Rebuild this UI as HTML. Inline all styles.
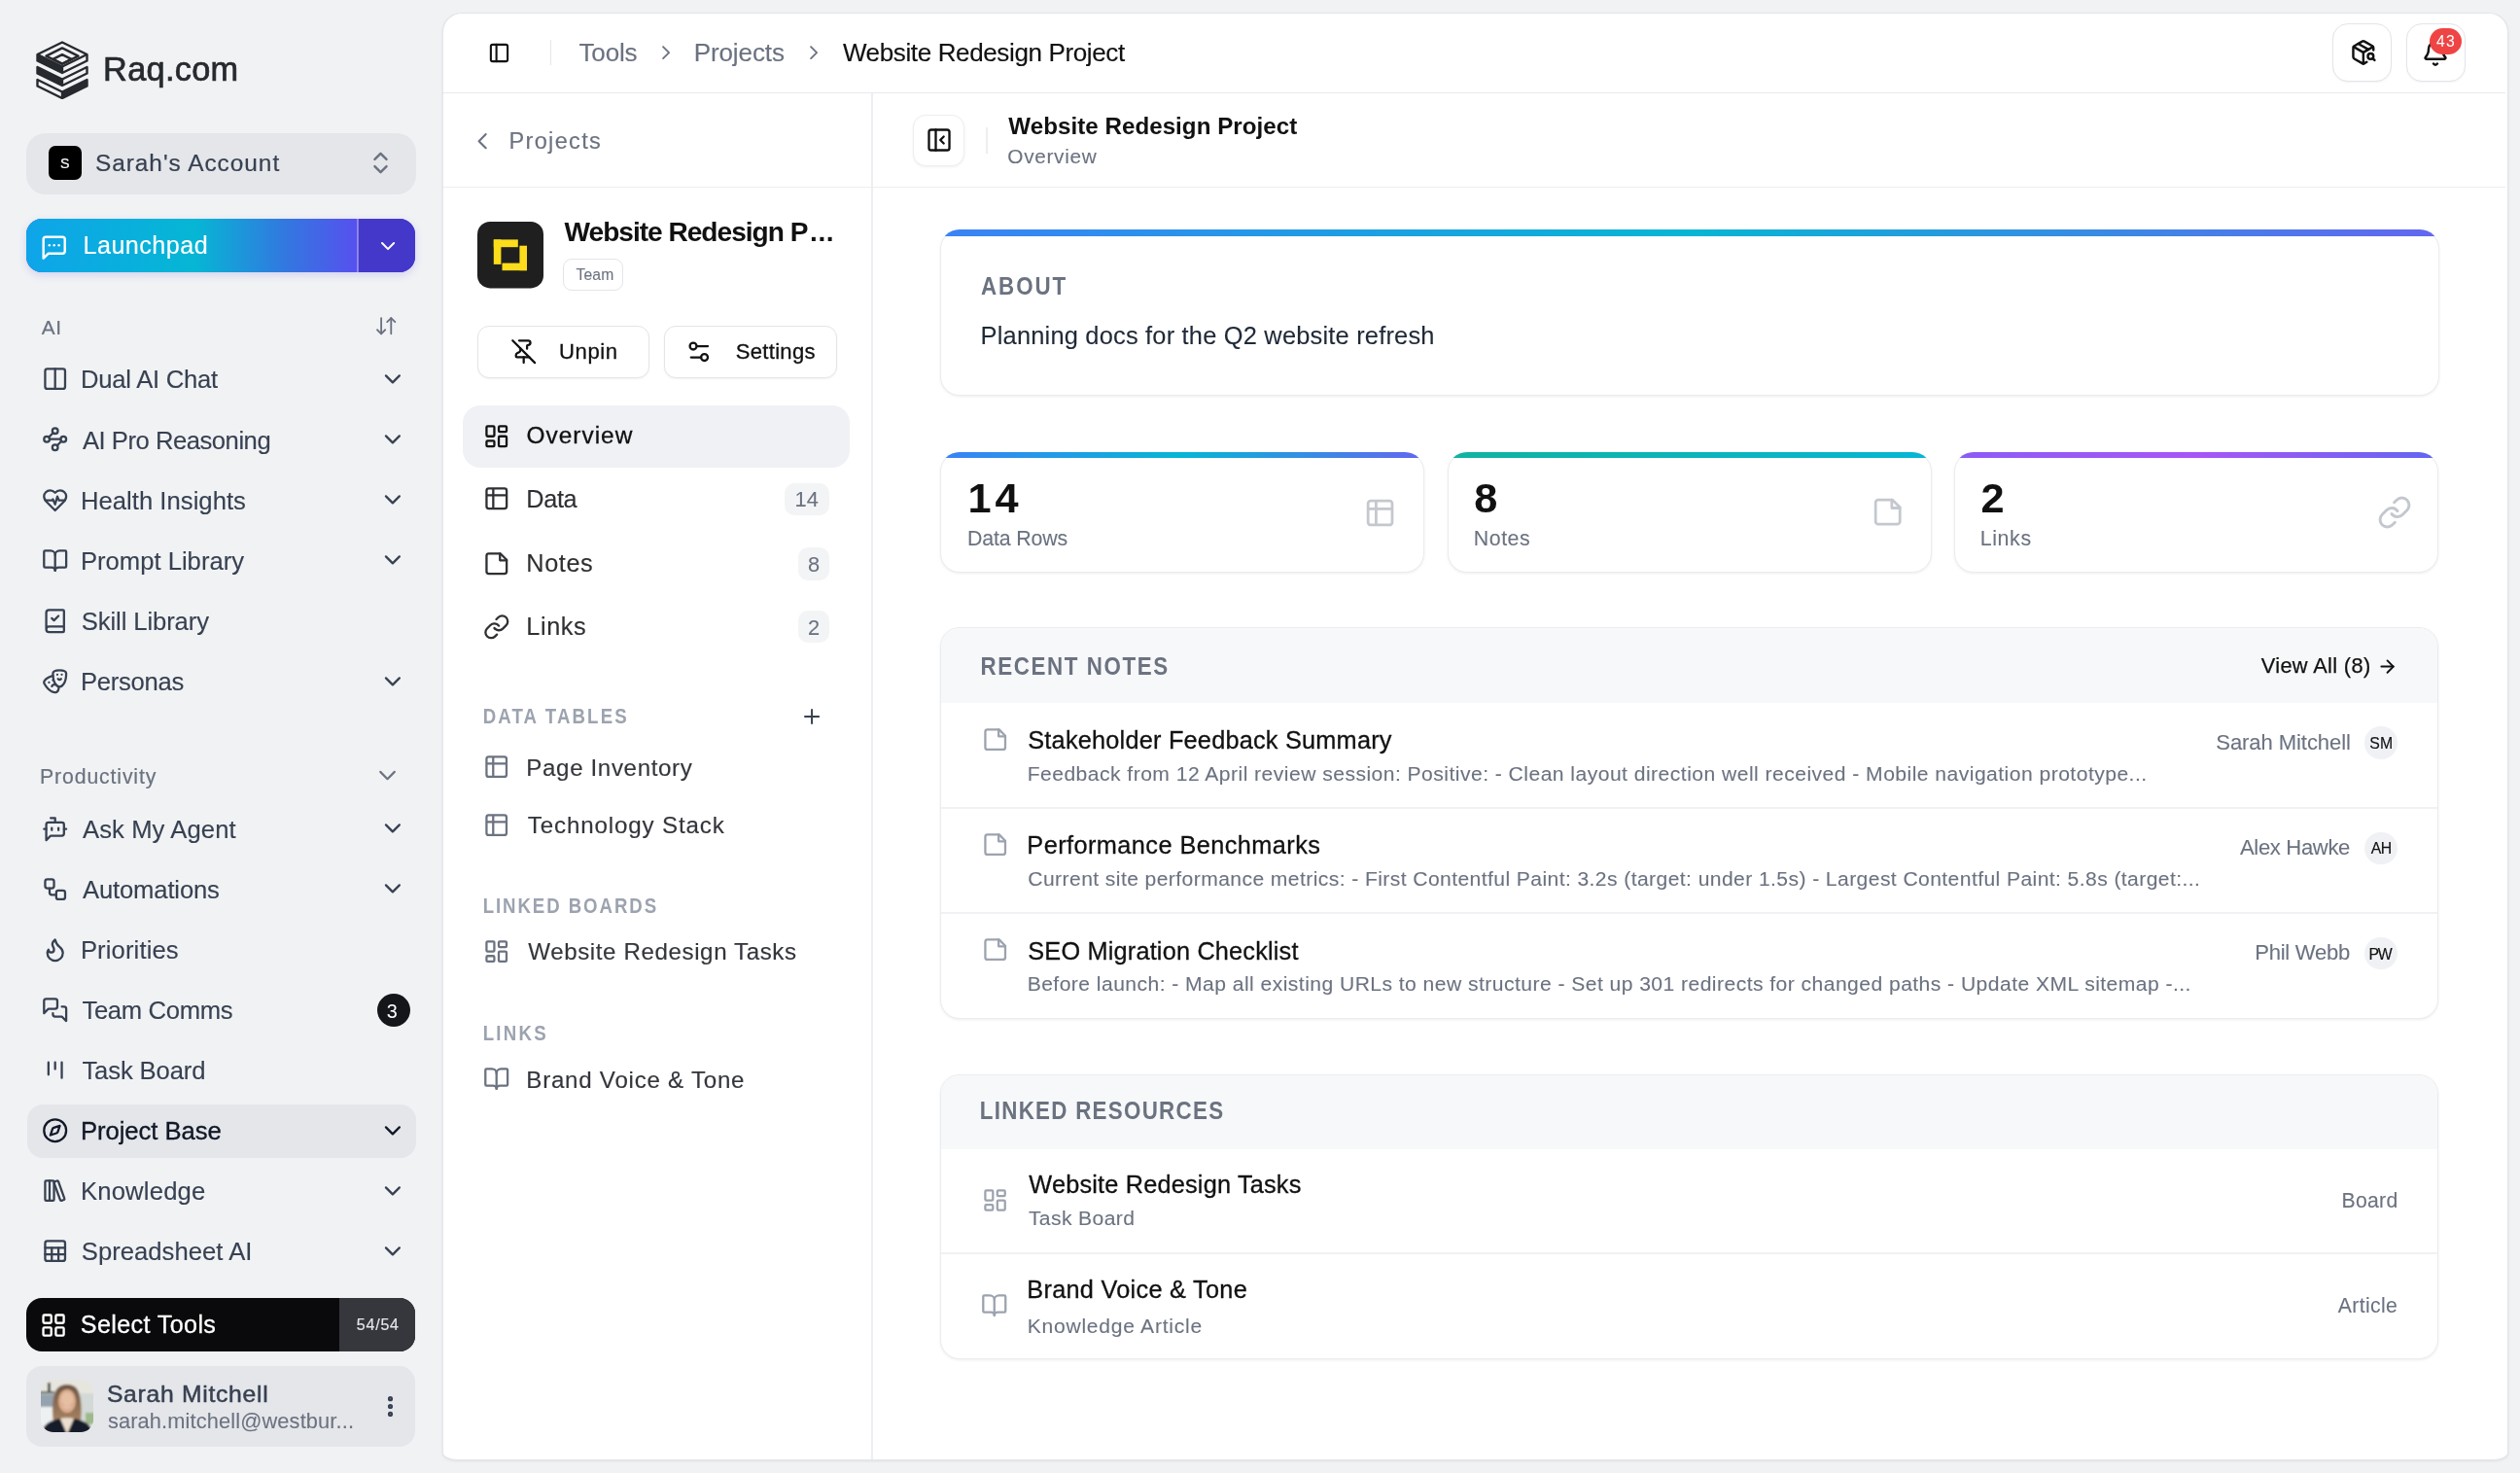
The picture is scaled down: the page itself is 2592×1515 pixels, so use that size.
<!DOCTYPE html>
<html><head><meta charset="utf-8"><style>
html,body{margin:0;padding:0;}
body{width:2592px;height:1515px;overflow:hidden;position:relative;background:#f1f2f4;font-family:"Liberation Sans",sans-serif;}
svg text{font-family:"Liberation Sans",sans-serif;}
</style></head><body>
<svg style="position:absolute;left:37px;top:42px" width="54" height="60" viewBox="0 0 54 60">
<g fill="none" stroke="#262a2e" stroke-width="2.4" stroke-linejoin="round">
<path d="M27 1.5 L52.5 14 L52.5 20.5 L27 33 L1.5 20.5 L1.5 14 Z"/>
<path d="M1.5 14 L27 26.5 L52.5 14"/>
<path d="M27 7.4 L43.5 15.6 L27 23.8 L10.5 15.6 Z"/>
<path d="M27 14.2 L36.5 18.9 L27 23.6 L17.5 18.9 Z"/>
<path d="M27 26.5 L27 33"/>
<path d="M1.5 27 L27 39.5 L52.5 27 L52.5 33.5 L27 46 L1.5 33.5 Z"/>
<path d="M27 39.5 L27 46"/>
<path d="M1.5 40 L27 52.5 L52.5 40 L52.5 46.5 L27 59 L1.5 46.5 Z"/>
<path d="M27 52.5 L27 59"/>
</g>
<g fill="#262a2e">
<path d="M1.5 14 L27 26.5 L27 33 L1.5 20.5 Z"/>
<path d="M1.5 27 L27 39.5 L27 46 L1.5 33.5 Z"/>
<path d="M52.5 40 L27 52.5 L27 59 L52.5 46.5 Z"/>
</g></svg>
<div style="position:absolute;left:27px;top:136.5px;width:401px;height:63.5px;background:#e5e6ea;border-radius:20px;"></div>
<div style="position:absolute;left:49.5px;top:150px;width:34.5px;height:34.5px;background:#000;border-radius:7px;"></div>
<svg style="position:absolute;left:376.75px;top:152.88px" width="29.00" height="29.00" viewBox="0 0 24 24" fill="none" stroke="#6b7280" stroke-width="2" stroke-linecap="round" stroke-linejoin="round"><path d="m7 15 5 5 5-5"/><path d="m7 9 5-5 5 5"/></svg>
<div style="position:absolute;left:27px;top:225px;width:400px;height:55px;border-radius:16px;background:#4338ca;box-shadow:0 3px 8px rgba(79,70,229,0.18);"></div>
<div style="position:absolute;left:27px;top:225px;width:341px;height:55px;border-radius:16px 0 0 16px;background:linear-gradient(90deg,#0ea5e9 0%,#06b6d4 51%,#3278e0 78%,#5750ee 100%);"></div>
<div style="position:absolute;left:368px;top:225px;width:59px;height:55px;background:#4338ca;border-radius:0 16px 16px 0;"></div>
<div style="position:absolute;left:367px;top:225px;width:1.5px;height:55px;background:rgba(255,255,255,0.35);"></div>
<svg style="position:absolute;left:40.55px;top:239.55px" width="29.40" height="29.40" viewBox="0 0 24 24" fill="none" stroke="#fff" stroke-width="2" stroke-linecap="round" stroke-linejoin="round"><path d="M21 15a2 2 0 0 1-2 2H7l-4 4V5a2 2 0 0 1 2-2h14a2 2 0 0 1 2 2z"/><path d="M8 10h.01"/><path d="M12 10h.01"/><path d="M16 10h.01"/></svg>
<svg style="position:absolute;left:386.97px;top:241.45px" width="24.15" height="24.15" viewBox="0 0 24 24" fill="none" stroke="#fff" stroke-width="2" stroke-linecap="round" stroke-linejoin="round"><path d="m6 9 6 6 6-6"/></svg>
<svg style="position:absolute;left:384.97px;top:323.45px" width="24.40" height="24.40" viewBox="0 0 24 24" fill="none" stroke="#6b7280" stroke-width="1.8" stroke-linecap="round" stroke-linejoin="round"><path d="m3 16 4 4 4-4"/><path d="M7 20V4"/><path d="m21 8-4-4-4 4"/><path d="M17 4v16"/></svg>
<svg style="position:absolute;left:42.50px;top:376.30px" width="27.40" height="27.40" viewBox="0 0 24 24" fill="none" stroke="#374151" stroke-width="2" stroke-linecap="round" stroke-linejoin="round"><rect width="18" height="18" x="3" y="3" rx="2"/><path d="M12 3v18"/></svg>
<svg style="position:absolute;left:390.21px;top:376.03px" width="27.81" height="27.81" viewBox="0 0 24 24" fill="none" stroke="#374151" stroke-width="2" stroke-linecap="round" stroke-linejoin="round"><path d="m6 9 6 6 6-6"/></svg>
<svg style="position:absolute;left:42.50px;top:438.42px" width="27.40" height="27.40" viewBox="0 0 24 24" fill="none" stroke="#374151" stroke-width="2" stroke-linecap="round" stroke-linejoin="round"><circle cx="12" cy="4.5" r="2.5"/><path d="m10.2 6.3-3.9 3.9"/><circle cx="4.5" cy="12" r="2.5"/><path d="M7 12h10"/><circle cx="19.5" cy="12" r="2.5"/><path d="m13.8 17.7 3.9-3.9"/><circle cx="12" cy="19.5" r="2.5"/></svg>
<svg style="position:absolute;left:390.21px;top:438.15px" width="27.81" height="27.81" viewBox="0 0 24 24" fill="none" stroke="#374151" stroke-width="2" stroke-linecap="round" stroke-linejoin="round"><path d="m6 9 6 6 6-6"/></svg>
<svg style="position:absolute;left:42.50px;top:500.54px" width="27.40" height="27.40" viewBox="0 0 24 24" fill="none" stroke="#374151" stroke-width="2" stroke-linecap="round" stroke-linejoin="round"><path d="M19 14c1.49-1.46 3-3.21 3-5.5A5.5 5.5 0 0 0 16.5 3c-1.76 0-3 .5-4.5 2-1.5-1.5-2.74-2-4.5-2A5.5 5.5 0 0 0 2 8.5c0 2.3 1.5 4.05 3 5.5l7 7Z"/><path d="M3.22 12H9.5l.5-1 2 4.5 2-7 1.5 3.5h5.27"/></svg>
<svg style="position:absolute;left:390.21px;top:500.27px" width="27.81" height="27.81" viewBox="0 0 24 24" fill="none" stroke="#374151" stroke-width="2" stroke-linecap="round" stroke-linejoin="round"><path d="m6 9 6 6 6-6"/></svg>
<svg style="position:absolute;left:42.50px;top:562.66px" width="27.40" height="27.40" viewBox="0 0 24 24" fill="none" stroke="#374151" stroke-width="2" stroke-linecap="round" stroke-linejoin="round"><path d="M12 7v14"/><path d="M3 18a1 1 0 0 1-1-1V4a1 1 0 0 1 1-1h5a4 4 0 0 1 4 4 4 4 0 0 1 4-4h5a1 1 0 0 1 1 1v13a1 1 0 0 1-1 1h-6a3 3 0 0 0-3 3 3 3 0 0 0-3-3z"/></svg>
<svg style="position:absolute;left:390.21px;top:562.39px" width="27.81" height="27.81" viewBox="0 0 24 24" fill="none" stroke="#374151" stroke-width="2" stroke-linecap="round" stroke-linejoin="round"><path d="m6 9 6 6 6-6"/></svg>
<svg style="position:absolute;left:42.50px;top:624.78px" width="27.40" height="27.40" viewBox="0 0 24 24" fill="none" stroke="#374151" stroke-width="2" stroke-linecap="round" stroke-linejoin="round"><path d="M4 19.5v-15A2.5 2.5 0 0 1 6.5 2H19a1 1 0 0 1 1 1v18a1 1 0 0 1-1 1H6.5a1 1 0 0 1 0-5H20"/><path d="m9 9.5 2 2 4-4"/></svg>
<svg style="position:absolute;left:42.50px;top:686.90px" width="27.40" height="27.40" viewBox="0 0 24 24" fill="none" stroke="#374151" stroke-width="2" stroke-linecap="round" stroke-linejoin="round"><path d="M10 11h.01"/><path d="M14 6h.01"/><path d="M18 6h.01"/><path d="M6.5 13.1h.01"/><path d="M22 5c0 9-4 12-6 12s-6-3-6-12c0-2 2-3 6-3s6 1 6 3"/><path d="M17.4 9.9c-.8.8-2 .8-2.8 0"/><path d="M10.1 7.1C9 7.2 7.7 7.7 6 8.6c-3.5 2-4.7 3.9-3.7 5.6 4.5 7.8 9.5 8.4 11.2 7.4.9-.5 1.9-2.1 1.9-4.7"/><path d="M9.1 16.5c.3-1.1 1.4-1.7 2.4-1.4"/></svg>
<svg style="position:absolute;left:390.21px;top:686.63px" width="27.81" height="27.81" viewBox="0 0 24 24" fill="none" stroke="#374151" stroke-width="2" stroke-linecap="round" stroke-linejoin="round"><path d="m6 9 6 6 6-6"/></svg>
<svg style="position:absolute;left:383.55px;top:782.91px" width="29.06" height="29.06" viewBox="0 0 24 24" fill="none" stroke="#6b7280" stroke-width="1.8" stroke-linecap="round" stroke-linejoin="round"><path d="m6 9 6 6 6-6"/></svg>
<svg style="position:absolute;left:42.50px;top:838.50px" width="27.40" height="27.40" viewBox="0 0 24 24" fill="none" stroke="#374151" stroke-width="2" stroke-linecap="round" stroke-linejoin="round"><path d="M12 6V2H8"/><path d="m8 18-4 4V8a2 2 0 0 1 2-2h12a2 2 0 0 1 2 2v8a2 2 0 0 1-2 2Z"/><path d="M2 12h2"/><path d="M9 11v2"/><path d="M15 11v2"/><path d="M20 12h2"/></svg>
<svg style="position:absolute;left:390.21px;top:838.23px" width="27.81" height="27.81" viewBox="0 0 24 24" fill="none" stroke="#374151" stroke-width="2" stroke-linecap="round" stroke-linejoin="round"><path d="m6 9 6 6 6-6"/></svg>
<svg style="position:absolute;left:42.50px;top:900.61px" width="27.40" height="27.40" viewBox="0 0 24 24" fill="none" stroke="#374151" stroke-width="2" stroke-linecap="round" stroke-linejoin="round"><rect width="8" height="8" x="3" y="3" rx="2"/><path d="M7 11v4a2 2 0 0 0 2 2h4"/><rect width="8" height="8" x="13" y="13" rx="2"/></svg>
<svg style="position:absolute;left:390.21px;top:900.34px" width="27.81" height="27.81" viewBox="0 0 24 24" fill="none" stroke="#374151" stroke-width="2" stroke-linecap="round" stroke-linejoin="round"><path d="m6 9 6 6 6-6"/></svg>
<svg style="position:absolute;left:42.50px;top:962.72px" width="27.40" height="27.40" viewBox="0 0 24 24" fill="none" stroke="#374151" stroke-width="2" stroke-linecap="round" stroke-linejoin="round"><path d="M8.5 14.5A2.5 2.5 0 0 0 11 12c0-1.38-.5-2-1-3-1.072-2.143-.224-4.054 2-6 .5 2.5 2 4.9 4 6.5 2 1.6 3 3.5 3 5.5a7 7 0 1 1-14 0c0-1.153.433-2.294 1-3a2.5 2.5 0 0 0 2.5 2.5z"/></svg>
<svg style="position:absolute;left:42.50px;top:1024.83px" width="27.40" height="27.40" viewBox="0 0 24 24" fill="none" stroke="#374151" stroke-width="2" stroke-linecap="round" stroke-linejoin="round"><path d="M14 9a2 2 0 0 1-2 2H6l-4 4V4a2 2 0 0 1 2-2h8a2 2 0 0 1 2 2z"/><path d="M18 9h2a2 2 0 0 1 2 2v11l-4-4h-6a2 2 0 0 1-2-2v-1"/></svg>
<div style="position:absolute;left:388px;top:1021.7px;width:34px;height:34px;background:#151619;border-radius:50%;"></div>
<svg style="position:absolute;left:42.50px;top:1086.94px" width="27.40" height="27.40" viewBox="0 0 24 24" fill="none" stroke="#374151" stroke-width="2" stroke-linecap="round" stroke-linejoin="round"><path d="M6 5v11"/><path d="M12 5v6"/><path d="M18 5v14"/></svg>
<div style="position:absolute;left:27.5px;top:1135.8px;width:400.5px;height:55px;background:#e5e6ea;border-radius:16px;"></div>
<svg style="position:absolute;left:42.50px;top:1149.05px" width="27.40" height="27.40" viewBox="0 0 24 24" fill="none" stroke="#111827" stroke-width="2" stroke-linecap="round" stroke-linejoin="round"><path d="m16.24 7.76-1.804 5.411a2 2 0 0 1-1.265 1.265L7.76 16.24l1.804-5.411a2 2 0 0 1 1.265-1.265z"/><circle cx="12" cy="12" r="10"/></svg>
<svg style="position:absolute;left:390.21px;top:1148.78px" width="27.81" height="27.81" viewBox="0 0 24 24" fill="none" stroke="#111827" stroke-width="2" stroke-linecap="round" stroke-linejoin="round"><path d="m6 9 6 6 6-6"/></svg>
<svg style="position:absolute;left:42.50px;top:1211.16px" width="27.40" height="27.40" viewBox="0 0 24 24" fill="none" stroke="#374151" stroke-width="2" stroke-linecap="round" stroke-linejoin="round"><rect width="8" height="18" x="3" y="3" rx="1"/><path d="M7 3v18"/><path d="M20.4 18.9c.2.5-.1 1.1-.6 1.3l-1.9.7c-.5.2-1.100-.1-1.300-.6L11.1 5.1c-.2-.5.1-1.100.6-1.300l1.900-.7c.5-.2 1.100.1 1.300.6Z"/></svg>
<svg style="position:absolute;left:390.21px;top:1210.89px" width="27.81" height="27.81" viewBox="0 0 24 24" fill="none" stroke="#374151" stroke-width="2" stroke-linecap="round" stroke-linejoin="round"><path d="m6 9 6 6 6-6"/></svg>
<svg style="position:absolute;left:42.50px;top:1273.27px" width="27.40" height="27.40" viewBox="0 0 24 24" fill="none" stroke="#374151" stroke-width="2" stroke-linecap="round" stroke-linejoin="round"><rect width="18" height="18" x="3" y="3" rx="2" ry="2"/><line x1="3" x2="21" y1="9" y2="9"/><line x1="3" x2="21" y1="15" y2="15"/><line x1="9" x2="9" y1="9" y2="21"/><line x1="15" x2="15" y1="9" y2="21"/></svg>
<svg style="position:absolute;left:390.21px;top:1273.00px" width="27.81" height="27.81" viewBox="0 0 24 24" fill="none" stroke="#374151" stroke-width="2" stroke-linecap="round" stroke-linejoin="round"><path d="m6 9 6 6 6-6"/></svg>
<div style="position:absolute;left:27px;top:1335px;width:400px;height:55.3px;background:#0a0a0c;border-radius:16px;"></div>
<div style="position:absolute;left:349px;top:1335px;width:78px;height:55.3px;background:#36373c;border-radius:0 16px 16px 0;"></div>
<svg style="position:absolute;left:41.45px;top:1349.36px" width="28.14" height="28.14" viewBox="0 0 24 24" fill="none" stroke="#fff" stroke-width="2" stroke-linecap="round" stroke-linejoin="round"><rect width="7" height="7" x="3" y="3" rx="1"/><rect width="7" height="7" x="14" y="3" rx="1"/><rect width="7" height="7" x="14" y="14" rx="1"/><rect width="7" height="7" x="3" y="14" rx="1"/></svg>
<div style="position:absolute;left:27px;top:1404.5px;width:400px;height:83.5px;background:#e5e6ea;border-radius:16px;"></div>
<svg style="position:absolute;left:42px;top:1419px" width="54" height="54" viewBox="0 0 54 54">
<defs><clipPath id="av"><rect width="54" height="54" rx="13"/></clipPath>
<filter id="bl" x="-10%" y="-10%" width="120%" height="120%"><feGaussianBlur stdDeviation="0.9"/></filter>
<linearGradient id="hair" x1="0" y1="0" x2="0" y2="1"><stop offset="0" stop-color="#6f5443"/><stop offset="1" stop-color="#a88462"/></linearGradient></defs>
<g clip-path="url(#av)"><g filter="url(#bl)">
<rect x="-2" y="-2" width="58" height="58" fill="#e6e6df"/>
<rect x="-2" y="15" width="17" height="13" fill="#94a3ae"/>
<rect x="-2" y="28" width="17" height="20" fill="#eef1f2"/>
<rect x="40" y="14" width="16" height="30" fill="#d3d9d6"/>
<rect x="46" y="34" width="10" height="12" fill="#9db88a"/>
<rect x="-2" y="12" width="16" height="2.2" fill="#50555a"/>
<rect x="7" y="3" width="3" height="9" fill="#3c4044"/>
<path d="M13 44 C11 30 12 20 15 12 C18 6 23 5 27 5 C32 5 37 7 39 13 C42 21 42 32 41 44 Z" fill="url(#hair)"/>
<ellipse cx="27" cy="22" rx="9" ry="12" fill="#dcae8f"/>
<ellipse cx="27" cy="20" rx="6" ry="7" fill="#e6bfa2"/>
<path d="M21 27 Q27 31 33 27 Q27 29.5 21 27 Z" fill="#f3e6e0"/>
<path d="M1 56 C2 46 9 42 20 40 L27 54 L34 40 C45 42 52 46 54 56 Z" fill="#151b2b"/>
<path d="M20 40 L27 56 L34 40 C32 39 22 39 20 40 Z" fill="#ecdfcf"/>
</g></g></svg>
<svg style="position:absolute;left:387.50px;top:1432.80px" width="27.00" height="27.00" viewBox="0 0 24 24" fill="none" stroke="#374151" stroke-width="2.6" stroke-linecap="round" stroke-linejoin="round"><circle cx="12" cy="12" r="1"/><circle cx="12" cy="5" r="1"/><circle cx="12" cy="19" r="1"/></svg>
<div style="position:absolute;left:455px;top:13px;width:2124.5px;height:1488.5px;background:#fff;border:1px solid #e3e5e9;border-radius:20px 20px 16px 16px / 20px 20px 8px 8px;box-shadow:0 1px 3px rgba(0,0,0,0.08);box-sizing:border-box;"></div>
<div style="position:absolute;left:456px;top:94.5px;width:2121px;height:1.5px;background:#e8e9ee;"></div>
<svg style="position:absolute;left:502.08px;top:43.29px" width="22.98" height="22.98" viewBox="0 0 24 24" fill="none" stroke="#111" stroke-width="2.2" stroke-linecap="round" stroke-linejoin="round"><rect width="18" height="18" x="3" y="3" rx="2"/><path d="M9 3v18"/></svg>
<div style="position:absolute;left:565.5px;top:40.7px;width:1.5px;height:26.5px;background:#e5e7eb;"></div>
<svg style="position:absolute;left:673.44px;top:42.26px" width="24.19" height="24.19" viewBox="0 0 24 24" fill="none" stroke="#6b7280" stroke-width="1.8" stroke-linecap="round" stroke-linejoin="round"><path d="m9 18 6-6-6-6"/></svg>
<svg style="position:absolute;left:824.94px;top:42.26px" width="24.19" height="24.19" viewBox="0 0 24 24" fill="none" stroke="#6b7280" stroke-width="1.8" stroke-linecap="round" stroke-linejoin="round"><path d="m9 18 6-6-6-6"/></svg>
<div style="position:absolute;left:2399px;top:24.4px;width:61px;height:60px;background:#fff;border:1.5px solid #e3e5ea;border-radius:16px;box-sizing:border-box;box-shadow:0 1px 2px rgba(0,0,0,0.05);"></div>
<div style="position:absolute;left:2475px;top:24.4px;width:61px;height:60px;background:#fff;border:1.5px solid #e3e5ea;border-radius:16px;box-sizing:border-box;box-shadow:0 1px 2px rgba(0,0,0,0.05);"></div>
<svg style="position:absolute;left:2416.69px;top:39.67px" width="27.72" height="27.72" viewBox="0 0 24 24" fill="none" stroke="#111" stroke-width="2.1" stroke-linecap="round" stroke-linejoin="round"><path d="M21 10V8a2 2 0 0 0-1-1.73l-7-4a2 2 0 0 0-2 0l-7 4A2 2 0 0 0 3 8v8a2 2 0 0 0 1 1.73l7 4a2 2 0 0 0 2 0l2-1.14"/><path d="m7.5 4.27 9 5.15"/><polyline points="3.29 7 12 12 20.71 7"/><line x1="12" x2="12" y1="22" y2="12"/><circle cx="18.5" cy="15.5" r="2.5"/><path d="M20.27 17.27 22 19"/></svg>
<svg style="position:absolute;left:2490.82px;top:41.30px" width="27.99" height="27.99" viewBox="0 0 24 24" fill="none" stroke="#111" stroke-width="2.1" stroke-linecap="round" stroke-linejoin="round"><path d="M10.268 21a2 2 0 0 0 3.464 0"/><path d="M3.262 15.326A1 1 0 0 0 4 17h16a1 1 0 0 0 .74-1.673C19.41 13.956 18 12.499 18 8A6 6 0 0 0 6 8c0 4.499-1.411 5.956-2.738 7.326"/></svg>
<div style="position:absolute;left:2499px;top:28.5px;width:33px;height:27px;background:#ef4444;border-radius:14px;"></div>
<div style="position:absolute;left:896px;top:95.5px;width:1.5px;height:1405px;background:#eceef2;"></div>
<div style="position:absolute;left:456px;top:191.8px;width:2121px;height:1.5px;background:#eceef2;"></div>
<svg style="position:absolute;left:482.36px;top:130.60px" width="28.33" height="28.33" viewBox="0 0 24 24" fill="none" stroke="#6b7280" stroke-width="1.8" stroke-linecap="round" stroke-linejoin="round"><path d="m15 18-6-6 6-6"/></svg>
<svg style="position:absolute;left:491px;top:228.3px" width="68" height="68.4" viewBox="0 0 68 68.4">
<rect width="68" height="68.4" rx="13" fill="#1f1f1f"/>
<g fill="#fcdc1b">
<rect x="16.8" y="18.4" width="25" height="7.8"/>
<rect x="16.8" y="18.4" width="7.6" height="25.5"/>
<rect x="43.4" y="24.7" width="7.6" height="25.5"/>
<rect x="25.5" y="42.6" width="25.5" height="7.6"/>
</g></svg>
<div style="position:absolute;left:579.3px;top:266px;width:61.7px;height:33.4px;border:1.5px solid #e3e5ea;border-radius:9px;box-sizing:border-box;"></div>
<div style="position:absolute;left:491px;top:335px;width:177.3px;height:54px;background:#fff;border:1.5px solid #e3e5ea;border-radius:12px;box-sizing:border-box;box-shadow:0 1px 2px rgba(0,0,0,0.05);"></div>
<div style="position:absolute;left:683px;top:335px;width:177.5px;height:54px;background:#fff;border:1.5px solid #e3e5ea;border-radius:12px;box-sizing:border-box;box-shadow:0 1px 2px rgba(0,0,0,0.05);"></div>
<svg style="position:absolute;left:525.16px;top:347.86px" width="27.38" height="27.38" viewBox="0 0 24 24" fill="none" stroke="#111" stroke-width="2" stroke-linecap="round" stroke-linejoin="round"><path d="M12 17v5"/><path d="M15 9.34V7a1 1 0 0 1 1-1 2 2 0 0 0 0-4H7.89"/><path d="m2 2 20 20"/><path d="M9 9v1.76a2 2 0 0 1-1.11 1.79l-1.78.9A2 2 0 0 0 5 15.24V16a1 1 0 0 0 1 1h11"/></svg>
<svg style="position:absolute;left:704.85px;top:348.15px" width="27.60" height="27.60" viewBox="0 0 24 24" fill="none" stroke="#111" stroke-width="2" stroke-linecap="round" stroke-linejoin="round"><path d="M20 7h-9"/><path d="M14 17H5"/><circle cx="17" cy="17" r="3"/><circle cx="7" cy="7" r="3"/></svg>
<div style="position:absolute;left:475.8px;top:417.3px;width:398.7px;height:64.2px;background:#f0f1f5;border-radius:18px;"></div>
<svg style="position:absolute;left:496.61px;top:435.01px" width="27.48" height="27.48" viewBox="0 0 24 24" fill="none" stroke="#111" stroke-width="2" stroke-linecap="round" stroke-linejoin="round"><rect width="7" height="9" x="3" y="3" rx="1"/><rect width="7" height="5" x="14" y="3" rx="1"/><rect width="7" height="9" x="14" y="12" rx="1"/><rect width="7" height="5" x="3" y="16" rx="1"/></svg>
<svg style="position:absolute;left:496.70px;top:499.20px" width="27.60" height="27.60" viewBox="0 0 24 24" fill="none" stroke="#2e3033" stroke-width="2" stroke-linecap="round" stroke-linejoin="round"><path d="M9 3H5a2 2 0 0 0-2 2v4m6-6h10a2 2 0 0 1 2 2v4M9 3v18m0 0h10a2 2 0 0 0 2-2V9M9 21H5a2 2 0 0 1-2-2V9m0 0h18"/></svg>
<div style="position:absolute;left:807.2px;top:497px;width:45.7px;height:33.4px;background:#f3f4f6;border-radius:10px;"></div>
<svg style="position:absolute;left:496.70px;top:565.50px" width="27.60" height="27.60" viewBox="0 0 24 24" fill="none" stroke="#2e3033" stroke-width="2" stroke-linecap="round" stroke-linejoin="round"><path d="M15.5 3H5a2 2 0 0 0-2 2v14c0 1.1.9 2 2 2h14a2 2 0 0 0 2-2V8.5L15.5 3Z"/><path d="M15 3v6h6"/></svg>
<div style="position:absolute;left:821px;top:563px;width:31.9px;height:33.7px;background:#f3f4f6;border-radius:10px;"></div>
<svg style="position:absolute;left:496.70px;top:630.70px" width="27.60" height="27.60" viewBox="0 0 24 24" fill="none" stroke="#2e3033" stroke-width="2" stroke-linecap="round" stroke-linejoin="round"><path d="M10 13a5 5 0 0 0 7.54.54l3-3a5 5 0 0 0-7.070-7.070l-1.720 1.710"/><path d="M14 11a5 5 0 0 0-7.540-.54l-3 3a5 5 0 0 0 7.070 7.070l1.710-1.710"/></svg>
<div style="position:absolute;left:821px;top:627.8px;width:31.9px;height:33px;background:#f3f4f6;border-radius:10px;"></div>
<svg style="position:absolute;left:823.18px;top:724.77px" width="24.15" height="24.15" viewBox="0 0 24 24" fill="none" stroke="#374151" stroke-width="2" stroke-linecap="round" stroke-linejoin="round"><path d="M5 12h14"/><path d="M12 5v14"/></svg>
<svg style="position:absolute;left:496.80px;top:775.20px" width="27.40" height="27.40" viewBox="0 0 24 24" fill="none" stroke="#6b7280" stroke-width="2" stroke-linecap="round" stroke-linejoin="round"><path d="M9 3H5a2 2 0 0 0-2 2v4m6-6h10a2 2 0 0 1 2 2v4M9 3v18m0 0h10a2 2 0 0 0 2-2V9M9 21H5a2 2 0 0 1-2-2V9m0 0h18"/></svg>
<svg style="position:absolute;left:496.80px;top:834.60px" width="27.40" height="27.40" viewBox="0 0 24 24" fill="none" stroke="#6b7280" stroke-width="2" stroke-linecap="round" stroke-linejoin="round"><path d="M9 3H5a2 2 0 0 0-2 2v4m6-6h10a2 2 0 0 1 2 2v4M9 3v18m0 0h10a2 2 0 0 0 2-2V9M9 21H5a2 2 0 0 1-2-2V9m0 0h18"/></svg>
<svg style="position:absolute;left:496.80px;top:965.40px" width="27.40" height="27.40" viewBox="0 0 24 24" fill="none" stroke="#6b7280" stroke-width="2" stroke-linecap="round" stroke-linejoin="round"><rect width="7" height="9" x="3" y="3" rx="1"/><rect width="7" height="5" x="14" y="3" rx="1"/><rect width="7" height="9" x="14" y="12" rx="1"/><rect width="7" height="5" x="3" y="16" rx="1"/></svg>
<svg style="position:absolute;left:496.80px;top:1096.30px" width="27.40" height="27.40" viewBox="0 0 24 24" fill="none" stroke="#6b7280" stroke-width="2" stroke-linecap="round" stroke-linejoin="round"><path d="M12 7v14"/><path d="M3 18a1 1 0 0 1-1-1V4a1 1 0 0 1 1-1h5a4 4 0 0 1 4 4 4 4 0 0 1 4-4h5a1 1 0 0 1 1 1v13a1 1 0 0 1-1 1h-6a3 3 0 0 0-3 3 3 3 0 0 0-3-3z"/></svg>
<div style="position:absolute;left:939.4px;top:117.7px;width:53px;height:53px;background:#fff;border:1.5px solid #eceef1;border-radius:13px;box-sizing:border-box;box-shadow:0 1px 3px rgba(0,0,0,0.06);"></div>
<svg style="position:absolute;left:952.37px;top:130.06px" width="28.02" height="28.02" viewBox="0 0 24 24" fill="none" stroke="#111" stroke-width="2" stroke-linecap="round" stroke-linejoin="round"><rect width="18" height="18" x="3" y="3" rx="2"/><path d="M9 3v18"/><path d="m16 15-3-3 3-3"/></svg>
<div style="position:absolute;left:1014px;top:130.5px;width:1.5px;height:27.8px;background:#eceef1;"></div>
<div style="position:absolute;left:966.5px;top:235.8px;width:1542.0px;height:171.7px;background:#fff;border:1.3px solid #eaecef;border-radius:20px;box-sizing:border-box;box-shadow:0 1px 3px rgba(0,0,0,0.07);overflow:hidden;"></div>
<div style="position:absolute;left:966.5px;top:235.8px;width:1542.0px;height:22px;border-radius:20px 20px 0 0;overflow:hidden;"><div style="position:absolute;left:0;top:0;right:0;height:7px;background:linear-gradient(90deg,#3b82f6 0%,#06b6d4 50%,#6366f1 100%);"></div></div>
<div style="position:absolute;left:966.5px;top:464.8px;width:498.79999999999995px;height:124.19999999999999px;background:#fff;border:1.3px solid #eaecef;border-radius:20px;box-sizing:border-box;box-shadow:0 1px 3px rgba(0,0,0,0.07);overflow:hidden;"></div>
<div style="position:absolute;left:966.5px;top:464.8px;width:498.79999999999995px;height:22px;border-radius:20px 20px 0 0;overflow:hidden;"><div style="position:absolute;left:0;top:0;right:0;height:6.3px;background:linear-gradient(90deg,#3b82f6 0%,#06b6d4 50%,#6366f1 100%);"></div></div>
<div style="position:absolute;left:1488.7px;top:464.8px;width:497.89999999999986px;height:124.19999999999999px;background:#fff;border:1.3px solid #eaecef;border-radius:20px;box-sizing:border-box;box-shadow:0 1px 3px rgba(0,0,0,0.07);overflow:hidden;"></div>
<div style="position:absolute;left:1488.7px;top:464.8px;width:497.89999999999986px;height:22px;border-radius:20px 20px 0 0;overflow:hidden;"><div style="position:absolute;left:0;top:0;right:0;height:6.3px;background:linear-gradient(90deg,#10b3a0 0%,#06b6d4 100%);"></div></div>
<div style="position:absolute;left:2009.7px;top:464.8px;width:498.79999999999995px;height:124.19999999999999px;background:#fff;border:1.3px solid #eaecef;border-radius:20px;box-sizing:border-box;box-shadow:0 1px 3px rgba(0,0,0,0.07);overflow:hidden;"></div>
<div style="position:absolute;left:2009.7px;top:464.8px;width:498.79999999999995px;height:22px;border-radius:20px 20px 0 0;overflow:hidden;"><div style="position:absolute;left:0;top:0;right:0;height:6.3px;background:linear-gradient(90deg,#8b5cf6 0%,#a855f7 50%,#6366f1 100%);"></div></div>
<svg style="position:absolute;left:1403.24px;top:510.84px" width="33.12" height="33.12" viewBox="0 0 24 24" fill="none" stroke="#c4c8ce" stroke-width="2" stroke-linecap="round" stroke-linejoin="round"><path d="M9 3H5a2 2 0 0 0-2 2v4m6-6h10a2 2 0 0 1 2 2v4M9 3v18m0 0h10a2 2 0 0 0 2-2V9M9 21H5a2 2 0 0 1-2-2V9m0 0h18"/></svg>
<svg style="position:absolute;left:1925.02px;top:510.22px" width="33.36" height="33.36" viewBox="0 0 24 24" fill="none" stroke="#c4c8ce" stroke-width="2" stroke-linecap="round" stroke-linejoin="round"><path d="M15.5 3H5a2 2 0 0 0-2 2v14c0 1.1.9 2 2 2h14a2 2 0 0 0 2-2V8.5L15.5 3Z"/><path d="M15 3v6h6"/></svg>
<svg style="position:absolute;left:2444.65px;top:509.25px" width="36.00" height="36.00" viewBox="0 0 24 24" fill="none" stroke="#c4c8ce" stroke-width="2" stroke-linecap="round" stroke-linejoin="round"><path d="M10 13a5 5 0 0 0 7.54.54l3-3a5 5 0 0 0-7.070-7.070l-1.720 1.710"/><path d="M14 11a5 5 0 0 0-7.540-.54l-3 3a5 5 0 0 0 7.070 7.070l1.710-1.710"/></svg>
<div style="position:absolute;left:966.5px;top:645px;width:1541.5px;height:402.5px;background:#fff;border:1.3px solid #eaecef;border-radius:20px;box-sizing:border-box;box-shadow:0 1px 3px rgba(0,0,0,0.07);overflow:hidden;"><div style="position:absolute;left:0;top:0;right:0;height:77px;background:#f7f8fa;"></div><div style="position:absolute;left:0;top:184px;right:0;height:1.5px;background:#f0f1f4;"></div><div style="position:absolute;left:0;top:292px;right:0;height:1.5px;background:#f0f1f4;"></div></div>
<svg style="position:absolute;left:2444.67px;top:674.68px" width="21.15" height="21.15" viewBox="0 0 24 24" fill="none" stroke="#111" stroke-width="2.2" stroke-linecap="round" stroke-linejoin="round"><path d="M5 12h14"/><path d="m12 5 7 7-7 7"/></svg>
<svg style="position:absolute;left:1009.72px;top:746.62px" width="27.42" height="27.42" viewBox="0 0 24 24" fill="none" stroke="#9ca3af" stroke-width="2" stroke-linecap="round" stroke-linejoin="round"><path d="M15.5 3H5a2 2 0 0 0-2 2v14c0 1.1.9 2 2 2h14a2 2 0 0 0 2-2V8.5L15.5 3Z"/><path d="M15 3v6h6"/></svg>
<div style="position:absolute;left:2432px;top:747.3000000000001px;width:33.5px;height:33.5px;background:#f0f1f4;border-radius:50%;"></div>
<svg style="position:absolute;left:1009.72px;top:854.82px" width="27.42" height="27.42" viewBox="0 0 24 24" fill="none" stroke="#9ca3af" stroke-width="2" stroke-linecap="round" stroke-linejoin="round"><path d="M15.5 3H5a2 2 0 0 0-2 2v14c0 1.1.9 2 2 2h14a2 2 0 0 0 2-2V8.5L15.5 3Z"/><path d="M15 3v6h6"/></svg>
<div style="position:absolute;left:2432px;top:855.5000000000001px;width:33.5px;height:33.5px;background:#f0f1f4;border-radius:50%;"></div>
<svg style="position:absolute;left:1009.72px;top:963.01px" width="27.42" height="27.42" viewBox="0 0 24 24" fill="none" stroke="#9ca3af" stroke-width="2" stroke-linecap="round" stroke-linejoin="round"><path d="M15.5 3H5a2 2 0 0 0-2 2v14c0 1.1.9 2 2 2h14a2 2 0 0 0 2-2V8.5L15.5 3Z"/><path d="M15 3v6h6"/></svg>
<div style="position:absolute;left:2432px;top:963.7px;width:33.5px;height:33.5px;background:#f0f1f4;border-radius:50%;"></div>
<div style="position:absolute;left:966.5px;top:1104.5px;width:1541.5px;height:293px;background:#fff;border:1.3px solid #eaecef;border-radius:20px;box-sizing:border-box;box-shadow:0 1px 3px rgba(0,0,0,0.07);overflow:hidden;"><div style="position:absolute;left:0;top:0;right:0;height:76px;background:#f7f8fa;"></div><div style="position:absolute;left:0;top:182.5px;right:0;height:1.5px;background:#f0f1f4;"></div></div>
<svg style="position:absolute;left:1010.04px;top:1221.34px" width="27.12" height="27.12" viewBox="0 0 24 24" fill="none" stroke="#9ca3af" stroke-width="2" stroke-linecap="round" stroke-linejoin="round"><rect width="7" height="9" x="3" y="3" rx="1"/><rect width="7" height="5" x="14" y="3" rx="1"/><rect width="7" height="9" x="14" y="12" rx="1"/><rect width="7" height="5" x="3" y="16" rx="1"/></svg>
<svg style="position:absolute;left:1009.35px;top:1329.10px" width="27.56" height="27.56" viewBox="0 0 24 24" fill="none" stroke="#9ca3af" stroke-width="2" stroke-linecap="round" stroke-linejoin="round"><path d="M12 7v14"/><path d="M3 18a1 1 0 0 1-1-1V4a1 1 0 0 1 1-1h5a4 4 0 0 1 4 4 4 4 0 0 1 4-4h5a1 1 0 0 1 1 1v13a1 1 0 0 1-1 1h-6a3 3 0 0 0-3 3 3 3 0 0 0-3-3z"/></svg>
<svg style="position:absolute;left:0;top:0;will-change:transform" width="2592" height="1515" viewBox="0 0 2592 1515">
<text x="106.09" y="82.70" font-size="34.30" font-weight="normal" fill="#262a2e" stroke="#262a2e" stroke-width="0.7" textLength="139.08" lengthAdjust="spacing">Raq.com</text>
<text x="62.05" y="172.70" font-size="14.24" font-weight="normal" fill="#fff" stroke="#fff" stroke-width="0.2">S</text>
<text x="97.89" y="176.00" font-size="24.42" font-weight="normal" fill="#374151" stroke="#374151" stroke-width="0.2" textLength="189.29" lengthAdjust="spacing">Sarah's Account</text>
<text x="85.54" y="260.70" font-size="25.15" font-weight="normal" fill="#fff" stroke="#fff" stroke-width="0.15" textLength="128.08" lengthAdjust="spacing">Launchpad</text>
<text x="42.76" y="343.80" font-size="20.79" font-weight="normal" fill="#6b7280" stroke="#6b7280" stroke-width="0.2" textLength="20.16" lengthAdjust="spacing">AI</text>
<text x="82.90" y="399.40" font-size="25.65" font-weight="normal" fill="#374151" stroke="#374151" stroke-width="0.12" textLength="141.29" lengthAdjust="spacing">Dual AI Chat</text>
<text x="84.95" y="461.52" font-size="25.65" font-weight="normal" fill="#374151" stroke="#374151" stroke-width="0.12" textLength="193.70" lengthAdjust="spacing">AI Pro Reasoning</text>
<text x="82.90" y="523.64" font-size="25.65" font-weight="normal" fill="#374151" stroke="#374151" stroke-width="0.12" textLength="170.03" lengthAdjust="spacing">Health Insights</text>
<text x="82.90" y="585.76" font-size="25.65" font-weight="normal" fill="#374151" stroke="#374151" stroke-width="0.12" textLength="168.15" lengthAdjust="spacing">Prompt Library</text>
<text x="83.84" y="647.88" font-size="25.65" font-weight="normal" fill="#374151" stroke="#374151" stroke-width="0.12" textLength="131.12" lengthAdjust="spacing">Skill Library</text>
<text x="82.90" y="710.00" font-size="25.65" font-weight="normal" fill="#374151" stroke="#374151" stroke-width="0.12" textLength="106.43" lengthAdjust="spacing">Personas</text>
<text x="41.06" y="806.00" font-size="21.22" font-weight="normal" fill="#6b7280" stroke="#6b7280" stroke-width="0.2" textLength="119.28" lengthAdjust="spacing">Productivity</text>
<text x="84.95" y="861.60" font-size="25.65" font-weight="normal" fill="#374151" stroke="#374151" stroke-width="0.12" textLength="157.64" lengthAdjust="spacing">Ask My Agent</text>
<text x="84.95" y="923.71" font-size="25.65" font-weight="normal" fill="#374151" stroke="#374151" stroke-width="0.12" textLength="140.98" lengthAdjust="spacing">Automations</text>
<text x="82.90" y="985.82" font-size="25.65" font-weight="normal" fill="#374151" stroke="#374151" stroke-width="0.12" textLength="100.73" lengthAdjust="spacing">Priorities</text>
<text x="84.42" y="1047.93" font-size="25.65" font-weight="normal" fill="#374151" stroke="#374151" stroke-width="0.12" textLength="155.20" lengthAdjust="spacing">Team Comms</text>
<text x="84.42" y="1110.04" font-size="25.65" font-weight="normal" fill="#374151" stroke="#374151" stroke-width="0.12" textLength="127.03" lengthAdjust="spacing">Task Board</text>
<text x="82.90" y="1172.15" font-size="25.65" font-weight="normal" fill="#111827" stroke="#111827" stroke-width="0.35" textLength="144.94" lengthAdjust="spacing">Project Base</text>
<text x="82.90" y="1234.26" font-size="25.65" font-weight="normal" fill="#374151" stroke="#374151" stroke-width="0.12" textLength="128.44" lengthAdjust="spacing">Knowledge</text>
<text x="83.84" y="1296.37" font-size="25.65" font-weight="normal" fill="#374151" stroke="#374151" stroke-width="0.12" textLength="175.53" lengthAdjust="spacing">Spreadsheet AI</text>
<text x="397.85" y="1046.50" font-size="19.77" font-weight="normal" fill="#fff">3</text>
<text x="82.86" y="1371.00" font-size="25.15" font-weight="normal" fill="#fff" stroke="#fff" stroke-width="0.3" textLength="139.05" lengthAdjust="spacing">Select Tools</text>
<text x="366.76" y="1368.00" font-size="15.99" font-weight="normal" fill="#e5e7eb" stroke="#e5e7eb" stroke-width="0.15" textLength="43.21" lengthAdjust="spacing">54/54</text>
<text x="109.88" y="1442.00" font-size="24.71" font-weight="normal" fill="#374151" stroke="#374151" stroke-width="0.5" textLength="165.78" lengthAdjust="spacing">Sarah Mitchell</text>
<text x="110.89" y="1469.00" font-size="21.80" font-weight="normal" fill="#6b7280" stroke="#6b7280" stroke-width="0.1" textLength="253.10" lengthAdjust="spacing">sarah.mitchell@westbur...</text>
<text x="595.42" y="63.00" font-size="26.02" font-weight="normal" fill="#6b7280" stroke="#6b7280" stroke-width="0.15" textLength="60.22" lengthAdjust="spacing">Tools</text>
<text x="713.67" y="63.00" font-size="26.02" font-weight="normal" fill="#6b7280" stroke="#6b7280" stroke-width="0.15" textLength="93.27" lengthAdjust="spacing">Projects</text>
<text x="866.89" y="63.00" font-size="26.02" font-weight="normal" fill="#111" stroke="#111" stroke-width="0.15" textLength="290.30" lengthAdjust="spacing">Website Redesign Project</text>
<text x="2506.04" y="47.50" font-size="15.70" font-weight="normal" fill="#fff" textLength="18.65" lengthAdjust="spacing">43</text>
<text x="523.47" y="152.70" font-size="23.55" font-weight="normal" fill="#6b7280" stroke="#6b7280" stroke-width="0.15" textLength="94.38" lengthAdjust="spacing">Projects</text>
<text x="580.57" y="247.80" font-size="28.05" font-weight="bold" fill="#111" textLength="250.79" lengthAdjust="spacing">Website Redesign P</text>
<text x="833.10" y="247.80" font-size="28.05" font-weight="bold" fill="#111" textLength="24.44" lengthAdjust="spacing">...</text>
<text x="592.45" y="287.60" font-size="15.70" font-weight="normal" fill="#6b7280" stroke="#6b7280" stroke-width="0.1" textLength="38.89" lengthAdjust="spacing">Team</text>
<text x="575.10" y="369.20" font-size="22.09" font-weight="normal" fill="#111" stroke="#111" stroke-width="0.3" textLength="59.94" lengthAdjust="spacing">Unpin</text>
<text x="756.80" y="369.20" font-size="22.09" font-weight="normal" fill="#111" stroke="#111" stroke-width="0.3" textLength="81.70" lengthAdjust="spacing">Settings</text>
<text x="541.54" y="455.70" font-size="24.42" font-weight="normal" fill="#111" stroke="#111" stroke-width="0.3" textLength="108.80" lengthAdjust="spacing">Overview</text>
<text x="541.33" y="521.70" font-size="25.29" font-weight="normal" fill="#2e3033" stroke="#2e3033" stroke-width="0.15" textLength="52.27" lengthAdjust="spacing">Data</text>
<text x="817.56" y="521.40" font-size="21.80" font-weight="normal" fill="#6b7280" stroke="#6b7280" stroke-width="0.1">14</text>
<text x="541.33" y="588.00" font-size="25.29" font-weight="normal" fill="#2e3033" stroke="#2e3033" stroke-width="0.15" textLength="68.39" lengthAdjust="spacing">Notes</text>
<text x="830.94" y="587.70" font-size="21.80" font-weight="normal" fill="#6b7280" stroke="#6b7280" stroke-width="0.1">8</text>
<text x="541.33" y="653.20" font-size="25.29" font-weight="normal" fill="#2e3033" stroke="#2e3033" stroke-width="0.15" textLength="61.29" lengthAdjust="spacing">Links</text>
<text x="830.94" y="652.90" font-size="21.80" font-weight="normal" fill="#6b7280" stroke="#6b7280" stroke-width="0.1">2</text>
<text transform="translate(496.65,743.90) scale(0.86,1)" x="0" y="0" font-size="21.66" font-weight="bold" fill="#9ca3af" textLength="172.06" lengthAdjust="spacing">DATA TABLES</text>
<text x="541.32" y="797.60" font-size="24.13" font-weight="normal" fill="#33363b" stroke="#33363b" stroke-width="0.15" textLength="170.53" lengthAdjust="spacing">Page Inventory</text>
<text x="542.76" y="857.00" font-size="24.13" font-weight="normal" fill="#33363b" stroke="#33363b" stroke-width="0.15" textLength="202.01" lengthAdjust="spacing">Technology Stack</text>
<text transform="translate(496.65,939.40) scale(0.86,1)" x="0" y="0" font-size="21.66" font-weight="bold" fill="#9ca3af" textLength="207.53" lengthAdjust="spacing">LINKED BOARDS</text>
<text x="543.19" y="987.30" font-size="24.13" font-weight="normal" fill="#33363b" stroke="#33363b" stroke-width="0.15" textLength="275.88" lengthAdjust="spacing">Website Redesign Tasks</text>
<text transform="translate(496.65,1070.20) scale(0.86,1)" x="0" y="0" font-size="21.66" font-weight="bold" fill="#9ca3af" textLength="75.67" lengthAdjust="spacing">LINKS</text>
<text x="541.32" y="1119.00" font-size="24.13" font-weight="normal" fill="#33363b" stroke="#33363b" stroke-width="0.15" textLength="224.15" lengthAdjust="spacing">Brand Voice &amp; Tone</text>
<text x="1037.28" y="137.60" font-size="24.13" font-weight="bold" fill="#111" textLength="297.02" lengthAdjust="spacing">Website Redesign Project</text>
<text x="1036.32" y="167.80" font-size="20.79" font-weight="normal" fill="#6b7280" stroke="#6b7280" stroke-width="0.1" textLength="91.43" lengthAdjust="spacing">Overview</text>
<text transform="translate(1009.04,302.90) scale(0.86,1)" x="0" y="0" font-size="26.02" font-weight="bold" fill="#6b7280" textLength="101.39" lengthAdjust="spacing">ABOUT</text>
<text x="1008.61" y="353.70" font-size="25.44" font-weight="normal" fill="#1f2937" stroke="#1f2937" stroke-width="0.1" textLength="466.84" lengthAdjust="spacing">Planning docs for the Q2 website refresh</text>
<text x="995.57" y="526.80" font-size="43.31" font-weight="bold" fill="#111" textLength="51.96" lengthAdjust="spacing">14</text>
<text x="995.05" y="560.60" font-size="21.37" font-weight="normal" fill="#6b7280" stroke="#6b7280" stroke-width="0.1" textLength="103.22" lengthAdjust="spacing">Data Rows</text>
<text x="1516.23" y="526.80" font-size="43.31" font-weight="bold" fill="#111">8</text>
<text x="1515.85" y="560.60" font-size="21.37" font-weight="normal" fill="#6b7280" stroke="#6b7280" stroke-width="0.1" textLength="57.82" lengthAdjust="spacing">Notes</text>
<text x="2037.50" y="526.80" font-size="43.31" font-weight="bold" fill="#111">2</text>
<text x="2036.75" y="560.60" font-size="21.37" font-weight="normal" fill="#6b7280" stroke="#6b7280" stroke-width="0.1" textLength="52.32" lengthAdjust="spacing">Links</text>
<text transform="translate(1008.50,693.50) scale(0.86,1)" x="0" y="0" font-size="26.02" font-weight="bold" fill="#6b7280" textLength="223.92" lengthAdjust="spacing">RECENT NOTES</text>
<text x="2325.70" y="691.80" font-size="21.80" font-weight="normal" fill="#111" stroke="#111" stroke-width="0.25" textLength="112.45" lengthAdjust="spacing">View All (8)</text>
<text x="1057.25" y="770.10" font-size="25.29" font-weight="normal" fill="#111" stroke="#111" stroke-width="0.3" textLength="374.20" lengthAdjust="spacing">Stakeholder Feedback Summary</text>
<text x="1056.67" y="802.70" font-size="21.08" font-weight="normal" fill="#6b7280" stroke="#6b7280" stroke-width="0.1" textLength="1151.45" lengthAdjust="spacing">Feedback from 12 April review session: Positive: - Clean layout direction well received - Mobile navigation prototype...</text>
<text x="2279.30" y="771.00" font-size="22.09" font-weight="normal" fill="#6b7280" stroke="#6b7280" stroke-width="0.1" textLength="138.58" lengthAdjust="spacing">Sarah Mitchell</text>
<text x="2437.28" y="770.10" font-size="15.84" font-weight="normal" fill="#111" stroke="#111" stroke-width="0.15" textLength="24.02" lengthAdjust="spacing">SM</text>
<text x="1056.33" y="878.30" font-size="25.29" font-weight="normal" fill="#111" stroke="#111" stroke-width="0.3" textLength="301.59" lengthAdjust="spacing">Performance Benchmarks</text>
<text x="1057.33" y="910.90" font-size="21.08" font-weight="normal" fill="#6b7280" stroke="#6b7280" stroke-width="0.1" textLength="1205.59" lengthAdjust="spacing">Current site performance metrics: - First Contentful Paint: 3.2s (target: under 1.5s) - Largest Contentful Paint: 5.8s (target:...</text>
<text x="2303.96" y="879.20" font-size="22.09" font-weight="normal" fill="#6b7280" stroke="#6b7280" stroke-width="0.1" textLength="113.42" lengthAdjust="spacing">Alex Hawke</text>
<text x="2438.77" y="878.30" font-size="15.84" font-weight="normal" fill="#111" stroke="#111" stroke-width="0.15" textLength="21.52" lengthAdjust="spacing">AH</text>
<text x="1057.25" y="986.50" font-size="25.29" font-weight="normal" fill="#111" stroke="#111" stroke-width="0.3" textLength="278.23" lengthAdjust="spacing">SEO Migration Checklist</text>
<text x="1056.67" y="1019.10" font-size="21.08" font-weight="normal" fill="#6b7280" stroke="#6b7280" stroke-width="0.1" textLength="1196.75" lengthAdjust="spacing">Before launch: - Map all existing URLs to new structure - Set up 301 redirects for changed paths - Update XML sitemap -...</text>
<text x="2319.19" y="987.40" font-size="22.09" font-weight="normal" fill="#6b7280" stroke="#6b7280" stroke-width="0.1" textLength="98.14" lengthAdjust="spacing">Phil Webb</text>
<text x="2436.50" y="986.50" font-size="15.84" font-weight="normal" fill="#111" stroke="#111" stroke-width="0.15" textLength="24.25" lengthAdjust="spacing">PW</text>
<text transform="translate(1007.80,1151.10) scale(0.86,1)" x="0" y="0" font-size="26.02" font-weight="bold" fill="#6b7280" textLength="291.01" lengthAdjust="spacing">LINKED RESOURCES</text>
<text x="1058.29" y="1227.40" font-size="25.29" font-weight="normal" fill="#111" stroke="#111" stroke-width="0.3" textLength="280.02" lengthAdjust="spacing">Website Redesign Tasks</text>
<text x="1057.93" y="1260.30" font-size="21.08" font-weight="normal" fill="#6b7280" stroke="#6b7280" stroke-width="0.1" textLength="109.03" lengthAdjust="spacing">Task Board</text>
<text x="2408.46" y="1241.70" font-size="21.22" font-weight="normal" fill="#6b7280" stroke="#6b7280" stroke-width="0.1" textLength="57.81" lengthAdjust="spacing">Board</text>
<text x="1056.33" y="1335.20" font-size="25.29" font-weight="normal" fill="#111" stroke="#111" stroke-width="0.3" textLength="226.40" lengthAdjust="spacing">Brand Voice &amp; Tone</text>
<text x="1056.67" y="1370.50" font-size="21.08" font-weight="normal" fill="#6b7280" stroke="#6b7280" stroke-width="0.1" textLength="179.47" lengthAdjust="spacing">Knowledge Article</text>
<text x="2404.76" y="1349.70" font-size="21.22" font-weight="normal" fill="#6b7280" stroke="#6b7280" stroke-width="0.1" textLength="61.08" lengthAdjust="spacing">Article</text>
</svg>
</body></html>
